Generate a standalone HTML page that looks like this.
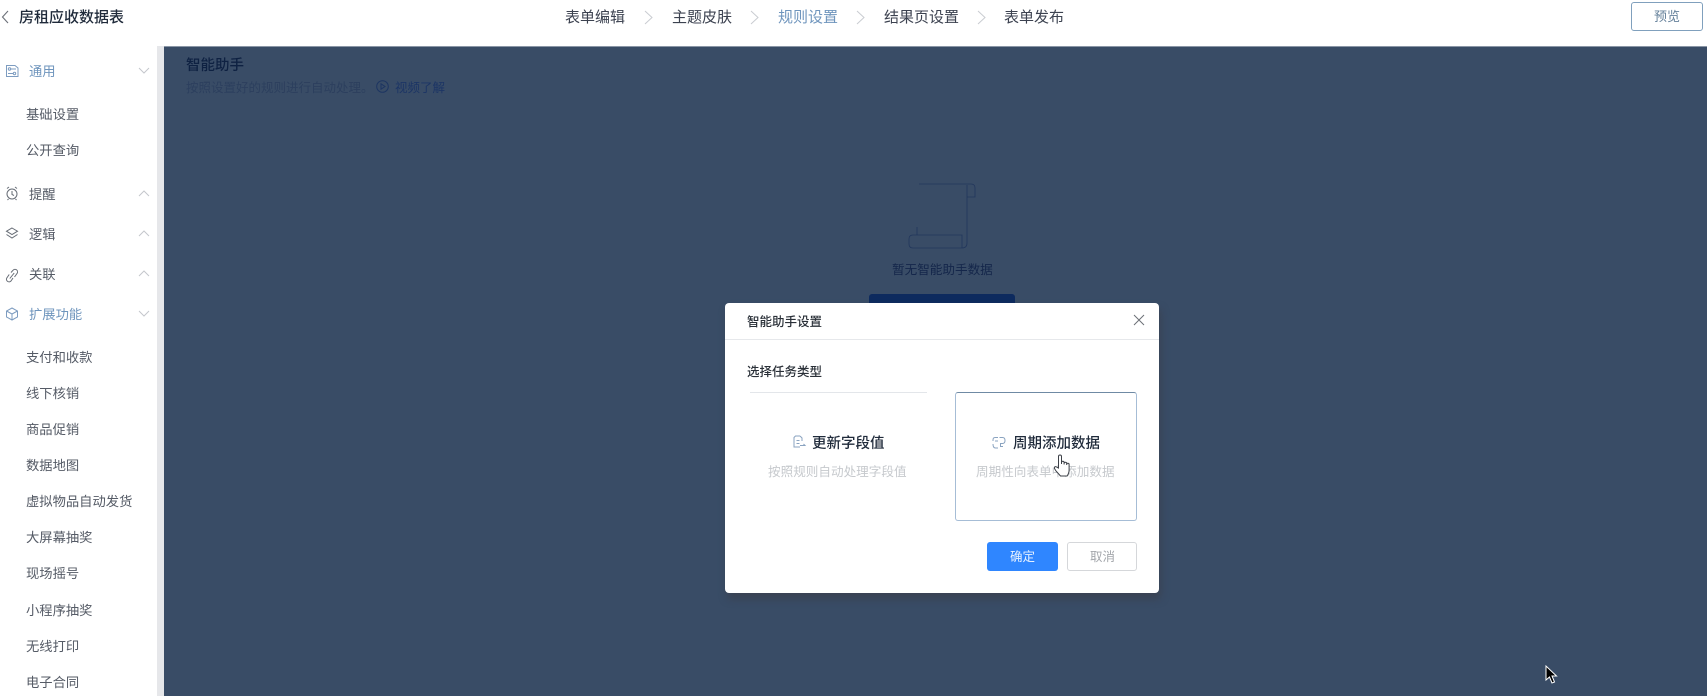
<!DOCTYPE html>
<html lang="zh"><head><meta charset="utf-8"><title>智能助手设置</title>
<style>
html,body{margin:0;padding:0}
body{width:1707px;height:696px;overflow:hidden;position:relative;background:#fff;font-family:"Liberation Sans","Noto Sans CJK SC",sans-serif;color:#2b3442;filter:blur(.3px)}
.t{position:absolute;white-space:nowrap;line-height:20px;font-size:13.300px}
.a{position:absolute}
svg{position:absolute;overflow:visible;fill:none}
.m{color:#555b66}
.b{color:#6f95bd}
.s{font-size:15px;top:8px;color:#3c4250}
</style></head><body>
<svg style="left:0;top:0" width="10" height="34"><path d="M8 11L2.500 17L8 23" stroke="#6b7078" stroke-width="1.100"/></svg>
<div class="t" style="left:19px;top:8px;font-size:15px;font-weight:500;color:#1f2a3a">房租应收数据表</div>

<div class="t s" style="left:565px">表单编辑</div>
<div class="t s" style="left:672px">主题皮肤</div>
<div class="t s" style="left:778px;color:#6f95bd">规则设置</div>
<div class="t s" style="left:884px">结果页设置</div>
<div class="t s" style="left:1004px">表单发布</div>
<svg style="left:0;top:0" width="1000" height="40"><path d="M645 11L652 17.500L645 24M751 11L758 17.500L751 24M857 11L864 17.500L857 24M978 11L985 17.500L978 24" stroke="#c9ccd1" stroke-width="1"/></svg>

<div class="a" style="left:1631px;top:2px;width:70px;height:27px;border:1px solid #80a0bd;border-radius:3px"></div>
<div class="t" style="left:1654px;top:7px;font-size:13px;color:#64809a">预览</div>

<!-- sidebar -->
<div class="a" style="left:157px;top:46px;width:7px;height:650px;background:#e6e7ea"></div>
<svg style="left:0;top:0" width="157" height="340">
<g stroke="#7d9cc0" stroke-width="1"><path d="M6.500 65.500H15L18 68V76.500H6.500z"/><circle cx="9.500" cy="69" r="1.200"/><path d="M11 69h5M8 73.500h5"/><circle cx="14.500" cy="73.500" r="1.200"/></g>
<g stroke="#666c75" stroke-width="1"><circle cx="12" cy="194" r="5"/><path d="M12 191v3.500l2 1M7 188.500l2-1.500M17 188.500l-2-1.500M8.500 199l-1 1M15.500 199l1 1"/>
<path d="M12 228l5.500 3.200L12 234.500L6.500 231.200zM6.500 234.500L12 238l5.500-3.500"/>
<path d="M11 272.500l2-2.200a2.500 2.500 0 0 1 4 3.200l-2.500 3.500M13 278l-2 3a2.600 2.600 0 0 1-4.200-3l2.400-3.500M9.800 278.500l4.400-5.500"/></g>
<g stroke="#7d9cc0" stroke-width="1"><path d="M12 308l5.500 3v6l-5.500 3-5.500-3v-6zM6.500 311l5.500 3 5.500-3M12 314v6"/></g>
<g stroke="#c4c7cc" stroke-width="1"><path d="M139 68l5 5 5-5M139 311l5 5 5-5"/><path d="M139 196l5-5 5 5M139 236l5-5 5 5M139 276l5-5 5 5"/></g>
</svg>
<div class="t b" style="left:29px;top:62px">通用</div>
<div class="t m" style="left:26px;top:105px">基础设置</div>
<div class="t m" style="left:26px;top:141px">公开查询</div>
<div class="t m" style="left:29px;top:185px">提醒</div>
<div class="t m" style="left:29px;top:225px">逻辑</div>
<div class="t m" style="left:29px;top:265px">关联</div>
<div class="t b" style="left:29px;top:305px">扩展功能</div>
<div class="t m" style="left:26px;top:348px">支付和收款</div>
<div class="t m" style="left:26px;top:384px">线下核销</div>
<div class="t m" style="left:26px;top:420px">商品促销</div>
<div class="t m" style="left:26px;top:456px">数据地图</div>
<div class="t m" style="left:26px;top:492px">虚拟物品自动发货</div>
<div class="t m" style="left:26px;top:528px">大屏幕抽奖</div>
<div class="t m" style="left:26px;top:564px">现场摇号</div>
<div class="t m" style="left:26px;top:601px">小程序抽奖</div>
<div class="t m" style="left:26px;top:637px">无线打印</div>
<div class="t m" style="left:26px;top:673px">电子合同</div>

<!-- overlay -->
<div class="a" style="left:164px;top:46px;width:1543px;height:650px;background:#394c66"></div>
<div class="a" style="left:0;top:46px;width:1707px;height:1px;background:#8a96a6;clip-path:inset(0 0 0 164px)"></div>
<div class="t" style="left:186px;top:56px;font-size:14.500px;font-weight:500;color:#0e2142">智能助手</div>
<div class="t" style="left:186px;top:78px;font-size:12.500px;color:#2c3f5e">按照设置好的规则进行自动处理。</div>
<svg style="left:376px;top:80px" width="14" height="14"><circle cx="6.500" cy="6.500" r="5.800" stroke="#1d3562"/><path d="M5 3.800L9 6.500L5 9.200z" stroke="#1d3562"/></svg>
<div class="t" style="left:395px;top:78px;font-size:12.500px;color:#1c3565">视频了解</div>
<svg style="left:905px;top:180px" width="80" height="72"><g stroke="#21365c" stroke-width=".8"><path d="M14 4H66q4 0 4 4v9h-8V5M62 17V63q0 5-5 5H8q-4 0-4-4V59q0-4 4-4H57V68M12 47V55"/></g></svg>
<div class="t" style="left:892px;top:260px;font-size:12.600px;color:#14264a">暂无智能助手数据</div>
<div class="a" style="left:869px;top:294px;width:146px;height:12px;background:#0d2a5e;border-radius:3px 3px 0 0"></div>

<!-- modal -->
<div class="a" style="left:725px;top:303px;width:434px;height:290px;background:#fff;border-radius:4px;box-shadow:2px 6px 8px #3a4354"></div>
<div class="t" style="left:747px;top:312px;font-size:12.500px;font-weight:500;color:#2a3038">智能助手设置</div>
<svg style="left:1133px;top:314px" width="12" height="12"><path d="M1 1L11 11M11 1L1 11" stroke="#6c7076" stroke-width="1"/></svg>
<div class="a" style="left:725px;top:339px;width:434px;height:1px;background:#e6e8eb"></div>
<div class="t" style="left:747px;top:362px;font-size:12.500px;font-weight:500;color:#2a3038">选择任务类型</div>
<div class="a" style="left:750px;top:392px;width:177px;height:1px;background:#e3e6ea"></div>
<svg style="left:792px;top:435px" width="14" height="14"><path d="M8 1H3.500L2 2.500V12H8M8 1l2 2V6M4.500 5.500h3M4.500 8.500h3M8 10.500h5l-1.500-1.500" stroke="#8aa3c0" stroke-width="1"/></svg>
<div class="t" style="left:812px;top:434px;font-size:14.500px;font-weight:500;color:#1f2a3a">更新字段值</div>
<div class="t" style="left:768px;top:462px;font-size:12.600px;color:#c6c9cd">按照规则自动处理字段值</div>

<div class="a" style="left:955px;top:392px;width:180px;height:127px;border:1px solid #a6bdd6;border-top-color:#6f8aa4;border-radius:3px"></div>
<svg style="left:992px;top:436px" width="14" height="14"><path d="M6 1.500H3Q1 1.500 1 4V5M1 8Q1 12 3.500 12H6M7.500 1.500h3Q13 1.500 13 4.500T10.500 7.500H8M6 5H3M8.500 7.500v3H11" stroke="#8aa3c0" stroke-width="1"/></svg>
<div class="t" style="left:1013px;top:434px;font-size:14.500px;font-weight:500;color:#1f2a3a">周期添加数据</div>
<div class="t" style="left:976px;top:462px;font-size:12.600px;color:#c6c9cd">周期性向表单中添加数据</div>
<svg style="left:1053px;top:453px" width="18" height="26"><path d="M5.500 15V3.500a1.500 1.500 0 0 1 3 0V11V9.500a1.300 1.300 0 0 1 2.600 0V11.500V10.500a1.300 1.300 0 0 1 2.600 0V12V11.500a1.200 1.200 0 0 1 2.400 0V17q0 3-2 6H7.500L3 18l-1.500-2.500q-.5-2 1.500-1.800z" fill="#fff" stroke="#3b3f46" stroke-width="1"/></svg>

<div class="a" style="left:987px;top:542px;width:71px;height:29px;background:#2f86ff;border-radius:3px"></div>
<div class="t" style="left:1010px;top:547px;font-size:12.500px;color:#e8f2ff">确定</div>
<div class="a" style="left:1067px;top:542px;width:68px;height:27px;border:1px solid #d5d7da;border-radius:3px"></div>
<div class="t" style="left:1090px;top:547px;font-size:12.500px;color:#a3a6ab">取消</div>

<svg style="left:1545px;top:665px" width="13" height="20"><path d="M1 1V15L4.500 12L7 18L9.500 17L7 11H11.500z" fill="#000" stroke="#fff" stroke-width="1"/></svg>
</body></html>
